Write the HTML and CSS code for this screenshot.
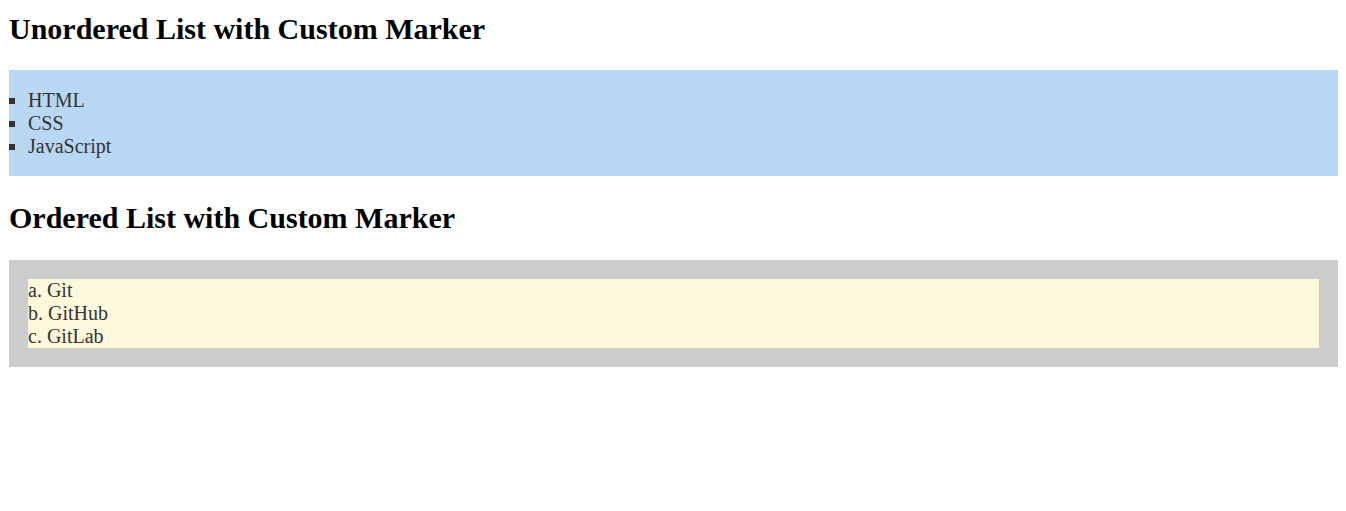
FILE: index.html
```html
<!DOCTYPE html>
<html>
<head>
<meta charset="utf-8">
<link rel="stylesheet" href="styles.css">
</head>
<body>
<h2 class="title title-first">Unordered List with Custom Marker</h2>
<ul class="square-list">
  <li>HTML</li>
  <li>CSS</li>
  <li>JavaScript</li>
</ul>
<h2 class="title">Ordered List with Custom Marker</h2>
<ol class="alpha-list">
  <li>Git</li>
  <li>GitHub</li>
  <li>GitLab</li>
</ol>
</body>
</html>
```
FILE: styles.css
```css
body {
  margin: 0;
  padding: 11px 8px 8px 9px;
  font-family: "Liberation Serif", "Times New Roman", serif;
  font-size: 20px;
}
.title {
  font-size: 30px;
  line-height: 35px;
  font-weight: bold;
  color: #000;
  margin: 24px 0 24px;
}
.title-first {
  margin-top: 0;
}
.square-list {
  list-style-type: square;
  background: #b8d7f3;
  margin: 0;
  padding: 18.5px 20px 18.5px 19px;
  color: #333;
  line-height: 23px;
}
.alpha-list {
  list-style-type: lower-alpha;
  list-style-position: inside;
  background: #cccccc;
  margin: 25px 0 0;
  padding: 19px;
  color: #333;
  line-height: 23px;
}
.alpha-list li {
  background: #fff8dc;
}
```
